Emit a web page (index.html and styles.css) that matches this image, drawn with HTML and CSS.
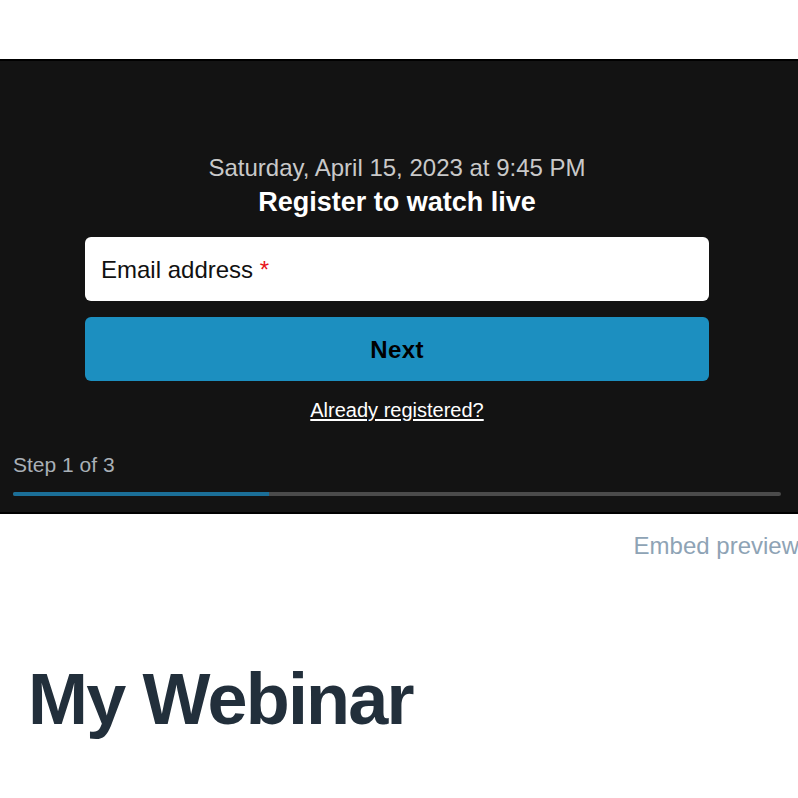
FILE: index.html
```html
<!DOCTYPE html>
<html lang="en">
<head>
<meta charset="utf-8">
<title>My Webinar</title>
<link rel="stylesheet" href="styles.css">
</head>
<body>
<div class="page">
  <section class="embed">
    <div class="embed-inner">
      <div class="date">Saturday, April 15, 2023 at 9:45 PM</div>
      <h2 class="headline">Register to watch live</h2>
      <form class="form">
        <label class="field">
          <span class="field-label">Email address <span class="req">*</span></span>
        </label>
        <button type="button" class="next">Next</button>
        <a class="already" href="#">Already registered?</a>
      </form>
      <div class="step">Step 1 of 3</div>
      <div class="progress"><div class="progress-fill" style="width:33.333%"></div></div>
    </div>
  </section>
  <div class="caption">Embed preview</div>
  <h1 class="title">My Webinar</h1>
</div>
</body>
</html>
```

FILE: styles.css
```css
html, body {
  margin: 0;
  padding: 0;
  background: #fff;
  overflow: hidden;
}
body {
  font-family: "Liberation Sans", Arial, Helvetica, sans-serif;
}
.page {
  width: 800px;
  padding-top: 59px;
}
.embed {
  background: #131313;
  border-top: 2px solid #000;
  border-bottom: 2px solid #000;
}
.embed-inner {
  padding: 91px 19px 16px 13px;
  display: flex;
  flex-direction: column;
  align-items: center;
}
.date {
  font-size: 24px;
  line-height: 32px;
  color: #c9c9c9;
  text-align: center;
}
.headline {
  margin: 2px 0 0;
  font-size: 27px;
  line-height: 32px;
  font-weight: bold;
  color: #fff;
  text-align: center;
}
.form {
  margin-top: 19px;
  width: 624px;
  display: flex;
  flex-direction: column;
  align-items: center;
}
.field {
  box-sizing: border-box;
  width: 100%;
  height: 64px;
  background: #fff;
  border-radius: 6px;
  display: flex;
  align-items: center;
  padding-left: 16px;
  padding-top: 2px;
}
.field-label {
  font-size: 24px;
  line-height: 28px;
  color: #111;
}
.req {
  color: #e8141c;
}
.next {
  margin-top: 16px;
  width: 100%;
  height: 64px;
  border: 0;
  border-radius: 6px;
  background: #1c8fc0;
  color: #000;
  font-family: "Liberation Sans", Arial, Helvetica, sans-serif;
  font-size: 24px;
  font-weight: bold;
  letter-spacing: 0.4px;
  padding: 2px 0 0;
}
.already {
  margin-top: 17px;
  font-size: 20px;
  line-height: 24px;
  color: #fff;
  text-decoration: underline;
  text-underline-offset: 2px;
}
.step {
  align-self: flex-start;
  margin-top: 31px;
  font-size: 21px;
  line-height: 24px;
  color: #a9b0b7;
}
.progress {
  align-self: stretch;
  margin-top: 15px;
  height: 4px;
  background: #4b4b4b;
  border-radius: 2px;
  overflow: hidden;
}
.progress-fill {
  height: 100%;
  background: #1b6f98;
}
.caption {
  margin-top: 18px;
  padding-right: 1px;
  text-align: right;
  font-size: 24px;
  line-height: 28px;
  color: #8ea3b5;
}
.title {
  margin: 99px 0 0;
  padding-left: 28px;
  font-size: 72px;
  line-height: 80px;
  font-weight: bold;
  letter-spacing: -1.8px;
  color: #222f3b;
}
```
